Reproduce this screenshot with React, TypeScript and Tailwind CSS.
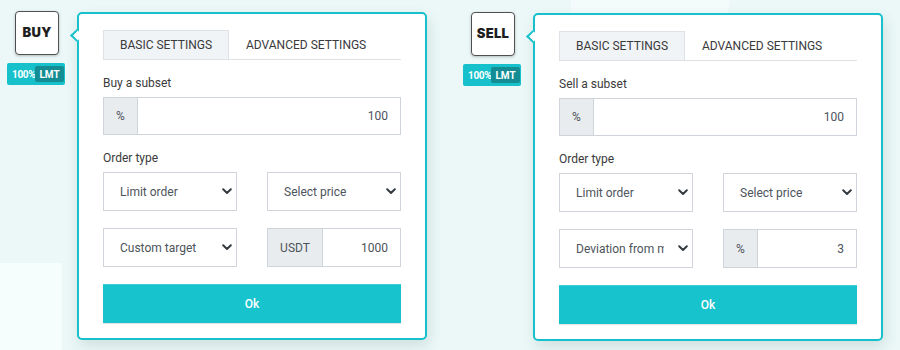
import React from "react";

const Chevron = () => (
  <svg width="10" height="7" viewBox="0 0 10 7" className="shrink-0">
    <path d="M1.2 1.3 L5 5 L8.8 1.3" fill="none" stroke="#343a40" strokeWidth="2" strokeLinecap="round" strokeLinejoin="round" />
  </svg>
);

const Select = ({ label }: { label: string }) => (
  <div className="flex h-[39px] items-center border border-[#ced4da] bg-white pl-[16px] pr-[4px]">
    <div className="min-w-0 flex-1 overflow-hidden whitespace-nowrap text-[12px] text-[#4d545b]">{label}</div>
    <div className="ml-[14px] flex w-[10px] justify-center">
      <Chevron />
    </div>
  </div>
);

const InputGroup = ({ addon, value, addonW, h }: { addon: string; value: string; addonW: string; h: string }) => (
  <div className={`${h} flex border border-[#ced4da] bg-white`}>
    <div className={`${addonW} flex items-center justify-center border-r border-[#ced4da] bg-[#e9ecef] text-[12px] text-[#4d545b]`}>
      {addon}
    </div>
    <div className="flex flex-1 items-center justify-end pr-[12px] text-[12px] text-[#4d545b]">{value}</div>
  </div>
);

const Panel = ({
  side,
  subset,
  second,
  addon,
  addonW,
  value,
  width,
}: {
  side: string;
  subset: string;
  second: string;
  addon: string;
  addonW: string;
  value: string;
  width: string;
}) => (
  <div className={`${width} flex shrink-0 items-start pl-[7px]`}>
    <div className="flex w-[58px] shrink-0 flex-col items-center pt-[11px]">
      <div className="ml-[2px] flex h-[44px] w-[44px] items-center justify-center rounded-[4px] border border-[#505050] bg-white shadow-[0_1px_3px_rgba(0,0,0,0.25)]">
        <span className="text-[13px] font-black tracking-[0.3px] text-[#1e1e1e]" style={{ fontFamily: "Inter, 'DejaVu Sans', sans-serif" }}>
          {side}
        </span>
      </div>
      <div className="mt-[8px] flex h-[22px] w-[58px] items-center justify-between rounded-[2px] bg-[#17c1cb] pl-[5px] pr-[2px] text-[10px] font-bold text-white">
        <span className="tracking-[-0.3px]">100%</span>
        <span className="flex h-[16px] items-center rounded-[2px] bg-[#138d93] px-[4px]">LMT</span>
      </div>
    </div>
    <div className="relative ml-[12px] mt-[12px] w-[350px] shrink-0 rounded-[5px] border-2 border-[#17c1cb] bg-white px-[24px] pb-[15px] pt-[16px] shadow-[2px_6px_14px_rgba(40,80,80,0.14)]">
      <div className="absolute left-[-7px] top-[17px] h-[9px] w-[9px] rotate-45 border-b-2 border-l-2 border-[#17c1cb] bg-white" />
      <div className="flex h-[30px] border-b border-[#dee2e6]">
        <div className="flex w-[126px] items-center justify-center border border-b-0 border-[#dee2e6] bg-[#f1f4f7] text-[12px] uppercase text-[#3a3a3a]">
          Basic settings
        </div>
        <div className="flex items-center px-[17px] text-[12px] uppercase text-[#3a3a3a]">Advanced settings</div>
      </div>
      <div className="mb-[5px] mt-[14px] text-[12px] leading-[18px] text-[#3a3a3a]">{subset}</div>
      <InputGroup h="h-[38px]" addon="%" value="100" addonW="w-[34px]" />
      <div className="mb-[5px] mt-[14px] text-[12px] leading-[18px] text-[#3a3a3a]">Order type</div>
      <div className="grid grid-cols-2 gap-x-[30px] gap-y-[17px]">
        <Select label="Limit order" />
        <Select label="Select price" />
        <Select label={second} />
        <InputGroup h="h-[39px]" addon={addon} value={value} addonW={addonW} />
      </div>
      <button className="mt-[17px] flex h-[39px] w-full items-center justify-center border-t border-[#3fcfd7] bg-[#17c3cc] text-[12px] font-medium text-white shadow-[0_1px_1px_rgba(0,0,0,0.1)]">
        Ok
      </button>
    </div>
  </div>
);

export default function App() {
  return (
    <div
      className="flex h-[350px] w-[900px] overflow-hidden [background:linear-gradient(#f5fdfd,#f5fdfd)_0_263px/62px_87px_no-repeat,linear-gradient(100deg,#f3fbfb_0,#f3fbfb_85%,transparent_85%)_571px_0/180px_40px_no-repeat,#ecf8f8]"
      style={{ fontFamily: "Roboto, 'Liberation Sans', sans-serif" }}
    >
      <Panel width="w-[456px]" side="BUY" subset="Buy a subset" second="Custom target" addon="USDT" addonW="w-[55px]" value="1000" />
      <div className="mt-[1px] shrink-0">
        <Panel width="w-[444px]" side="SELL" subset="Sell a subset" second="Deviation from market" addon="%" addonW="w-[34px]" value="3" />
      </div>
    </div>
  );
}
